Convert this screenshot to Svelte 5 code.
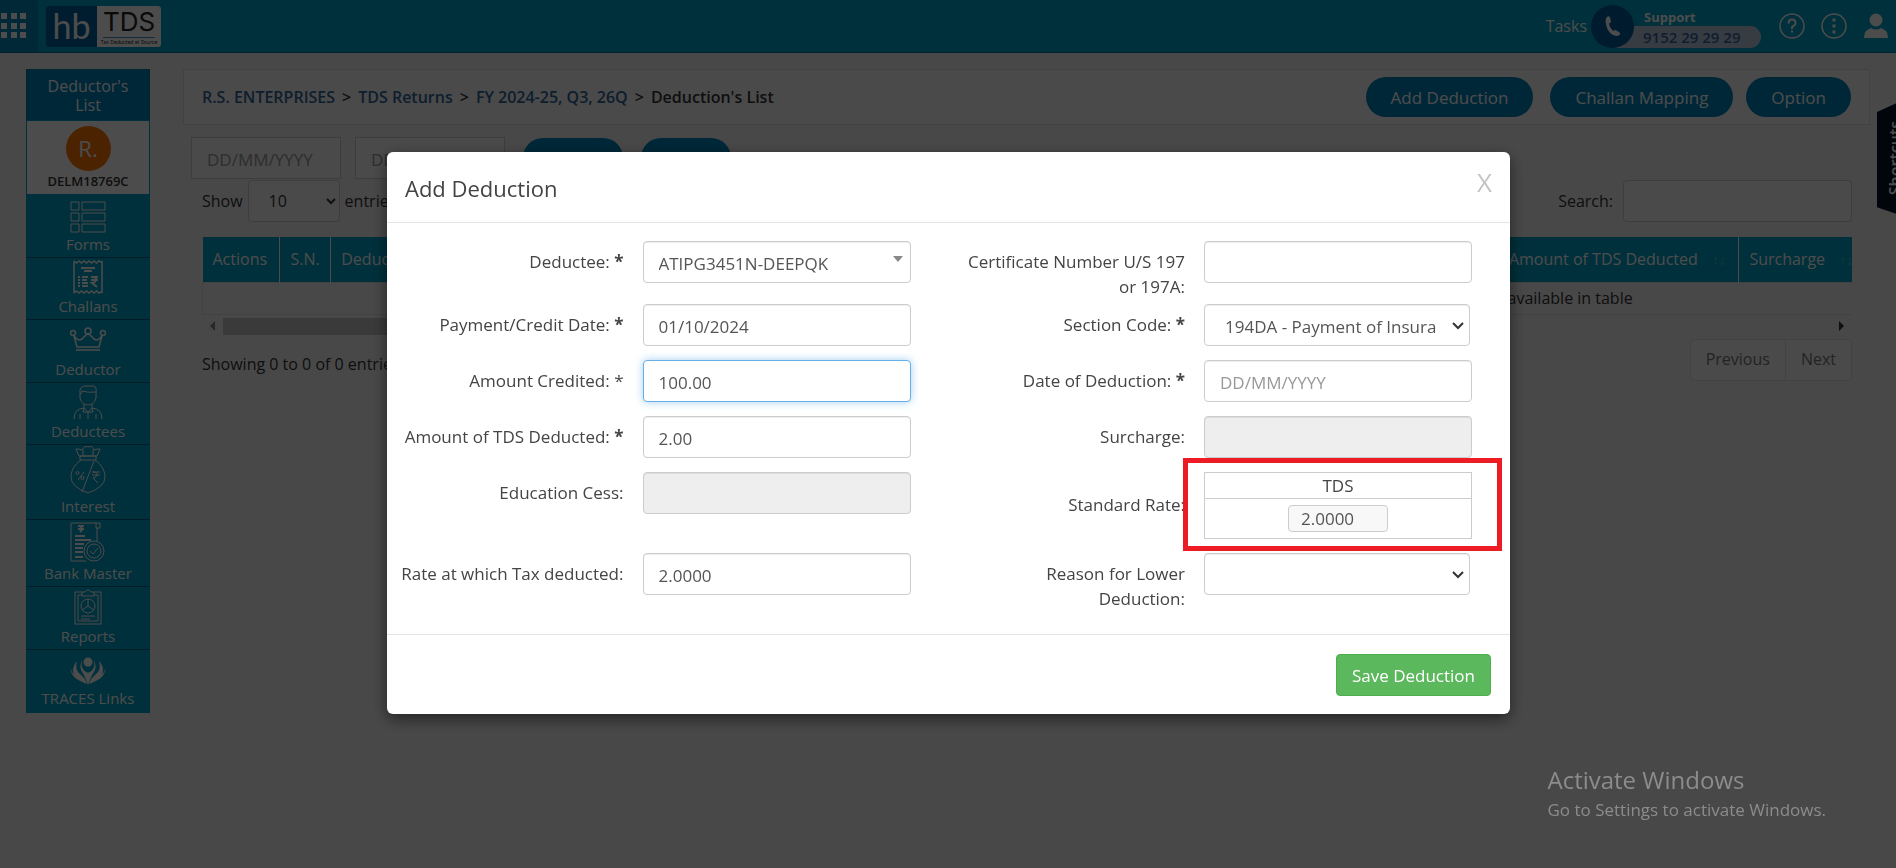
<script lang="ts">
	type Item = { name: string; icon: string; height: number };

	const items: Item[] = [
		{ name: 'Forms', icon: 'forms', height: 63 },
		{ name: 'Challans', icon: 'challans', height: 62 },
		{ name: 'Deductor', icon: 'crown', height: 63 },
		{ name: 'Deductees', icon: 'person', height: 62 },
		{ name: 'Interest', icon: 'bag', height: 75 },
		{ name: 'Bank Master', icon: 'bank', height: 67 },
		{ name: 'Reports', icon: 'reports', height: 63 },
		{ name: 'TRACES Links', icon: 'traces', height: 63 }
	];

	// widths are shares of the whole (scrolling) table
	const columns = [
		{ name: 'Actions', width: 2.9 },
		{ name: 'S.N.', width: 1.9 },
		{ name: 'Deductee Name', width: 43.7 },
		{ name: 'Amount of TDS Deducted', width: 9, sort: true },
		{ name: 'Surcharge', width: 4.6, sort: true },
		{ name: '', width: 37.9 }
	];

	let amount = '100.00';
	let paid = '01/10/2024';
	let tds = '2.00';
	let rate = '2.0000';
	let open = true;

	function close() {
		open = false;
	}
</script>

<div class="page">
	<header>
		<button class="apps" aria-label="Apps">
			<svg viewBox="0 0 26 26" width="26" height="26" fill="#fff">
				{#each [0, 10, 19] as y}
					{#each [0, 10, 19] as x}
						<rect {x} {y} width="6" height="6" />
					{/each}
				{/each}
			</svg>
		</button>
		<a class="logo" href="#home">
			<span class="hb">hb</span>
			<span class="tds">
				<b>TDS</b>
				<small>Tax Deducted at Source</small>
			</span>
		</a>
		<nav class="top">
			<a class="tasks" href="#tasks">Tasks</a>
			<div class="support">
				<span class="phone">
					<svg viewBox="0 0 16 20" width="16" height="20" fill="#fff">
						<path d="M2 1q2-1.500 3 .5l1 4q0 1.500-2 2 .5 4 4.500 7.500 1.500-1.500 3-.5l3 2q1.500 1.500 0 2.500-3 2-7.500-.5Q1 14 .5 5 .5 2 2 1z" />
					</svg>
				</span>
				<div class="lines">
					<b>Support</b>
					<span class="number">9152 29 29 29</span>
				</div>
			</div>
			<button aria-label="Help">
				<svg viewBox="0 0 26 26" width="26" height="26" fill="none" stroke="#fff" stroke-width="1.500">
					<circle cx="13" cy="13" r="12" />
					<path d="M9.500 10.500q0-4 3.500-4t3.500 3.500q0 2-2 3t-1.500 3M13 17.500v2" stroke-width="2" />
				</svg>
			</button>
			<button aria-label="More">
				<svg viewBox="0 0 26 26" width="26" height="26" fill="none" stroke="#fff" stroke-width="1.500">
					<circle cx="13" cy="13" r="12" />
					<path d="M13 5.500v3M13 11.500v3M13 17.500v3" stroke-width="3" />
				</svg>
			</button>
			<button aria-label="Account">
				<svg viewBox="0 0 26 26" width="26" height="26" fill="#fff">
					<circle cx="13" cy="7" r="6.500" />
					<path d="M1 25q0-8 7-10 5 3 10 0 7 2 7 10z" />
				</svg>
			</button>
		</nav>
	</header>

	<div class="columns">
		<aside>
			<a class="list" href="#deductors">Deductor's List</a>
			<div class="profile">
				<span class="avatar">R.</span>
				<span>DELM18769C</span>
			</div>
			{#each items as item}
				<a class="item" href="#{item.icon}" style="height: {item.height}px">
					{#if item.icon === 'forms'}
						<svg viewBox="0 0 36 32" width="36" height="32">
							<path d="M1 1h8v8H1zM12 1h23v8H12zM1 12h8v8H1zM12 12h23v8H12zM1 23h8v8H1zM12 23h23v8H12z" />
						</svg>
					{:else if item.icon === 'challans'}
						<svg viewBox="0 0 32 36" width="32" height="36">
							<path d="M2 2v32M30 2v32M2 2l2.500 2L7 2l2.500 2L12 2l2.500 2L17 2l2.500 2L22 2l2.500 2L27 2l3 1.500M2 34l2.500-2L7 34l2.500-2 2.500 2 2.500-2 2.500 2 2.500-2 2.500 2 2.500-2 2.500 2 3-1.500" stroke-width="1.500" />
							<path d="M9 9h14M12 12h8M6 18h2M10 18h6M6 21h2M10 21h5M6 24h2M10 24h6M6 27h2M10 27h6" stroke-width="2" />
							<path d="M19 18h7M19 21h7M20 18q5 0 4 3t-4 3l5 4" stroke-width="2" />
						</svg>
					{:else if item.icon === 'crown'}
						<svg viewBox="0 0 36 34" width="36" height="34" stroke-width="1.500">
							<circle cx="3" cy="9" r="2.500" />
							<circle cx="18" cy="7" r="3" />
							<circle cx="33" cy="9" r="2.500" />
							<path d="M4 12l3 11h22l3-11q-5 7-9 2l-4-4h-2l-4 4q-4 5-9-2zM6 26h24" />
						</svg>
					{:else if item.icon === 'person'}
						<svg viewBox="0 0 30 36" width="30" height="36">
							<path d="M7 10Q6 2 12 2h9q3 1 2 8v4q-2 7-8 7t-8-7zM7 10q2 0 2-3 6 2 14 1M11 20v4l4 4 4-4v-4M11 24q-10 1-10 11M19 24q10 1 10 11M15 28v7M7 30v5M23 30v5M11 24l-1 4 5 0 5 0-1-4" />
						</svg>
					{:else if item.icon === 'bag'}
						<svg viewBox="0 0 36 50" width="36" height="50">
							<path d="M9 11L6 4q4 0 6 1 3-5 6-3 5-2 6 3 2-1 6-1l-3 7zM13 5v5M23 5v5M10 11h16v4H10zM11 15Q1 22 1 32t17 16q17-6 17-16T25 15M24 16L12 47M6 28a1.500 1.500 0 1 0 3 0 1.500 1.500 0 1 0-3 0M14 27L8 35M11 33a1.500 1.500 0 1 0 3 0 1.500 1.500 0 1 0-3 0M22 27h8M22 30h8M23 27q5 0 4 3t-4 3l5 5" />
						</svg>
					{:else if item.icon === 'bank'}
						<svg viewBox="0 0 36 40" width="36" height="40">
							<path d="M16 39H1V1h29v5h-4V1M27 6v13" />
							<path d="M8 4h6M8 7h6M10 4q4 3 0 6M5 14h10M5 18h16M5 22h9M5 26h8M5 30h8M5 35h8" stroke-width="2" />
							<circle cx="24" cy="29" r="10" />
							<circle cx="24" cy="29" r="7" />
							<path d="M20 29l3 3 5-6" />
						</svg>
					{:else if item.icon === 'reports'}
						<svg viewBox="0 0 28 36" width="28" height="36">
							<path d="M8 3H1v32h26V3h-7M8 6H4v26h20V6h-4M8 3h3q3-4 6 0h3v4H8zM14 17V10M14 17l6 4M14 17l-6 4M7 27h14M7 30h9" />
							<circle cx="14" cy="17" r="7" />
						</svg>
					{:else}
						<svg class="solid" viewBox="0 0 36 30" width="36" height="30">
							<circle cx="18" cy="5" r="4.500" />
							<path d="M12 3q-4 8 2 15l4 10 4-10q6-7 2-15 2 10-6 13-8-3-6-13z" />
							<path d="M7 4q-3 9 4 14 4 3 6 9Q3 22 3 13 4 7 7 4zM29 4q3 9-4 14-4 3-6 9 14-5 14-14 0-5-4-9z" />
							<path d="M0 10q1 7 9 11 3 1 5 4Q1 22 0 10zM36 10q-1 7-9 11-3 1-5 4 13-3 14-15z" />
						</svg>
					{/if}
					<span>{item.name}</span>
				</a>
			{/each}
		</aside>

		<main>
			<div class="crumbs">
				<p>
					<a href="#company">R.S. ENTERPRISES</a>
					<span>&gt;</span>
					<a href="#returns">TDS Returns</a>
					<span>&gt;</span>
					<a href="#period">FY 2024-25, Q3, 26Q</a>
					<span>&gt;</span>
					<span>Deduction's List</span>
				</p>
				<div class="actions">
					<button class="pill add">Add Deduction</button>
					<button class="pill map">Challan Mapping</button>
					<button class="pill">Option</button>
				</div>
			</div>

			<div class="filters">
				<input aria-label="From date" placeholder="DD/MM/YYYY" />
				<input aria-label="To date" placeholder="DD/MM/YYYY" />
				<button class="pill" aria-label="Search"></button>
				<button class="pill" aria-label="Reset"></button>
			</div>

			<div class="list-area">
				<div class="tools">
					<label>
						Show
						<select>
							<option>10</option>
							<option>25</option>
						</select>
						entries
					</label>
					<label class="search">Search: <input type="search" /></label>
				</div>
				<div class="scroller">
					<table class="grid">
						<thead>
							<tr>
								{#each columns as column}
									<th style="width: {column.width}%">
										{column.name}
										{#if column.sort}<span class="sort">↑↓</span>{/if}
									</th>
								{/each}
							</tr>
						</thead>
						<tbody>
							<tr><td colspan={columns.length}>No data available in table</td></tr>
						</tbody>
					</table>
				</div>
				<div class="bar"><i class="left"></i><span></span><i class="right"></i></div>
				<div class="foot">
					<p>Showing 0 to 0 of 0 entries</p>
					<div class="pager">
						<button>Previous</button>
						<button>Next</button>
					</div>
				</div>
			</div>
		</main>
	</div>
	<button class="shortcuts"><span>Shortcuts</span></button>
</div>

{#if open}
	<div class="backdrop">
		<div class="modal" role="dialog" aria-modal="true" aria-labelledby="title">
			<div class="modal-head">
				<h4 id="title">Add Deduction</h4>
				<button class="close" on:click={close}>X</button>
			</div>
			<form on:submit|preventDefault>
				<div class="fields">
					<div class="field">
						<label for="deductee">Deductee: <b>*</b></label>
						<div class="control combo">
							<select id="deductee">
								<option>ATIPG3451N-DEEPQK</option>
							</select>
						</div>
					</div>
					<div class="field">
						<label for="certificate">Certificate Number U/S 197 or 197A:</label>
						<div class="control"><input id="certificate" /></div>
					</div>
					<div class="field">
						<label for="paid">Payment/Credit Date: <b>*</b></label>
						<div class="control"><input id="paid" bind:value={paid} /></div>
					</div>
					<div class="field">
						<label for="section">Section Code: <b>*</b></label>
						<div class="control drop">
							<select id="section">
								<option>194DA - Payment of Insura</option>
							</select>
							<svg viewBox="0 0 12 8" width="12" height="8"><path d="M1 1l5 5 5-5" /></svg>
						</div>
					</div>
					<div class="field">
						<label for="amount">Amount Credited: *</label>
						<div class="control"><input id="amount" class="active" bind:value={amount} /></div>
					</div>
					<div class="field">
						<label for="deducted">Date of Deduction: <b>*</b></label>
						<div class="control"><input id="deducted" placeholder="DD/MM/YYYY" /></div>
					</div>
					<div class="field">
						<label for="tds">Amount of TDS Deducted: <b>*</b></label>
						<div class="control"><input id="tds" bind:value={tds} /></div>
					</div>
					<div class="field">
						<label for="surcharge">Surcharge:</label>
						<div class="control"><input id="surcharge" disabled /></div>
					</div>
					<div class="field">
						<label for="cess">Education Cess:</label>
						<div class="control"><input id="cess" disabled /></div>
					</div>
					<div class="field middle">
						<label for="standard">Standard Rate:</label>
						<div class="control marked">
							<table class="rates">
								<thead>
									<tr><th>TDS</th></tr>
								</thead>
								<tbody>
									<tr><td><input id="standard" value="2.0000" readonly /></td></tr>
								</tbody>
							</table>
						</div>
					</div>
					<div class="field">
						<label for="rate">Rate at which Tax deducted:</label>
						<div class="control"><input id="rate" bind:value={rate} /></div>
					</div>
					<div class="field">
						<label for="reason">Reason for Lower Deduction:</label>
						<div class="control drop">
							<select id="reason">
								<option></option>
							</select>
							<svg viewBox="0 0 12 8" width="12" height="8"><path d="M1 1l5 5 5-5" /></svg>
						</div>
					</div>
				</div>
				<div class="modal-foot">
					<button class="save">Save Deduction</button>
				</div>
			</form>
		</div>
	</div>
{/if}

<div class="activate">
	<p>Activate Windows</p>
	<span>Go to Settings to activate Windows.</span>
</div>

<style>
	:global(body) {
		margin: 0;
		background: #f0f0f0;
		color: #333;
		font: 16px/25px 'Open Sans', 'Noto Sans', sans-serif;
		overflow-x: hidden;
	}

	:global(*) {
		box-sizing: border-box;
	}

	button,
	input,
	select {
		font: inherit;
		color: inherit;
		margin: 0;
	}

	button {
		border: 0;
		background: none;
		padding: 0;
		cursor: pointer;
	}

	a {
		text-decoration: none;
		color: inherit;
	}

	p {
		margin: 0;
	}

	header {
		display: flex;
		align-items: center;
		height: 53px;
		background: #00a0c6;
		border-bottom: 1px solid #007a99;
		color: #fff;
	}

	.apps {
		display: flex;
		align-items: center;
		width: 38px;
		height: 52px;
		padding-left: 1px;
		background: #0086b4;
	}

	.logo {
		display: flex;
		width: 115px;
		height: 41px;
		margin-left: 8px;
	}

	.hb {
		width: 51px;
		border-radius: 3px 0 0 3px;
		background: #005f9f;
		font: 34px/40px Lato, sans-serif;
		text-align: center;
	}

	.tds {
		display: flex;
		flex: 1;
		flex-direction: column;
		align-items: center;
		border-radius: 0 3px 3px 0;
		background: #fff;
		color: #222;
	}

	.tds b {
		font: 26px/31px Inter, sans-serif;
		border-bottom: 1px solid #4a90c8;
	}

	.tds small {
		font: 5px/8px Inter, sans-serif;
		white-space: nowrap;
	}

	.top {
		display: flex;
		align-items: center;
		margin-left: auto;
		padding-right: 7px;
	}

	.top button {
		display: flex;
		margin-left: 16px;
	}

	.tasks {
		margin-right: 4px;
	}

	.support {
		display: flex;
		margin-right: 2px;
	}

	.phone {
		display: flex;
		align-items: center;
		justify-content: center;
		width: 43px;
		height: 43px;
		border-radius: 50%;
		background: #005a9c;
		z-index: 1;
	}

	.lines {
		display: flex;
		flex-direction: column;
		justify-content: flex-end;
		margin-left: -22px;
		font-size: 15px;
		line-height: 22px;
	}

	.lines b {
		padding-left: 32px;
		font-size: 13px;
		line-height: 18px;
	}

	.number {
		width: 149px;
		padding-left: 31px;
		border-radius: 0 12px 12px 0;
		background: #b9c8df;
		color: #35629e;
		font-weight: 600;
	}

	.columns {
		display: flex;
		align-items: flex-start;
		padding: 16px 26px 0;
	}

	aside {
		width: 124px;
		flex: none;
		background: #00a0c6;
		color: #fff;
		text-align: center;
		font-size: 15px;
	}

	.list {
		display: block;
		height: 51px;
		padding: 8px 20px;
		background: #0084bc;
		font-size: 16px;
		line-height: 19px;
	}

	.profile {
		display: flex;
		flex-direction: column;
		align-items: center;
		height: 75px;
		padding-top: 5px;
		border: 1px solid #00a0c6;
		background: #fff;
		color: #333;
		font-size: 13px;
		font-weight: 600;
		line-height: 20px;
	}

	.avatar {
		width: 45px;
		height: 45px;
		border-radius: 50%;
		background: #ff7700;
		color: #fff;
		font-size: 22px;
		font-weight: 400;
		line-height: 45px;
	}

	.item {
		display: flex;
		flex-direction: column;
		align-items: center;
		justify-content: flex-end;
		border-bottom: 1px solid #006080;
		line-height: 22px;
		padding-bottom: 2px;
	}

	.item:last-child {
		border-bottom: 0;
		padding-bottom: 4px;
	}

	.item svg {
		fill: none;
		stroke: #fff;
	}

	.item .solid {
		fill: #fff;
		stroke: none;
	}

	main {
		flex: 1;
		min-width: 0;
		margin-left: 33px;
	}

	.crumbs {
		display: flex;
		align-items: center;
		justify-content: space-between;
		height: 56px;
		padding: 0 18px;
		border: 1px solid #ddd;
		background: #f8f8f8;
	}

	.crumbs p {
		display: flex;
		gap: 7px;
		font-weight: 600;
	}

	.crumbs a {
		color: #2f6698;
	}

	.actions {
		display: flex;
	}

	.pill {
		height: 40px;
		padding: 0 25px;
		border-radius: 20px;
		background: #0084bc;
		color: #fff;
		font-size: 17px;
	}

	.add {
		margin-right: 17px;
	}

	.map {
		margin-right: 13px;
	}

	.filters {
		display: flex;
		align-items: center;
		height: 42px;
		margin: 12px 0 1px 8px;
	}

	.filters input {
		width: 150px;
		height: 42px;
		margin-right: 14px;
		padding: 2px 15px 0;
		border: 1px solid #ccc;
		background: #f8f8f8;
		font-size: 17px;
	}

	.filters .pill {
		width: 100px;
		margin: 0 14px 0 4px;
	}

	.filters .pill:last-child {
		width: 90px;
	}

	.list-area {
		padding: 0 18px 0 19px;
	}

	.tools {
		display: flex;
		justify-content: space-between;
	}

	.tools label {
		display: flex;
		align-items: center;
		gap: 5px;
	}

	.tools select,
	.tools input {
		height: 42px;
		border: 1px solid #ccc;
		border-radius: 4px;
		background: #f8f8f8;
	}

	.tools select {
		width: 92px;
		padding: 0 0 0 16px;
	}

	.tools .search {
		gap: 10px;
	}

	.tools input {
		width: 229px;
	}

	.scroller {
		margin-top: 15px;
		overflow: hidden;
	}

	.grid {
		width: 162%;
		border-collapse: collapse;
		table-layout: fixed;
		white-space: nowrap;
	}

	.grid th {
		height: 45px;
		padding: 0 0 0 10px;
		border-right: 1px solid #fff;
		background: #00a0c6;
		color: #fff;
		font-weight: 400;
		text-align: left;
	}

	.grid th:nth-child(n + 5) {
		border-right: 0;
	}

	.grid td {
		height: 32px;
		padding: 0;
		border: 1px solid #ddd;
		text-align: center;
	}

	.sort {
		margin-left: 10px;
		font-size: 14px;
		opacity: 0.3;
	}

	.bar {
		display: flex;
		align-items: center;
		gap: 8px;
		height: 17px;
		margin-top: 3px;
		padding: 0 8px;
		background: #f1f1f1;
	}

	.bar span {
		width: 62%;
		height: 17px;
		background: #c1c1c1;
	}

	.bar i {
		border: 5px solid transparent;
	}

	.bar .left {
		border-left: 0;
		border-right-color: #888;
	}

	.bar .right {
		margin-left: auto;
		border-right: 0;
		border-left-color: #333;
	}

	.foot {
		display: flex;
		justify-content: space-between;
		padding-top: 4px;
	}

	.foot p {
		padding-top: 13px;
	}

	.pager {
		display: flex;
		border: 1px solid #ddd;
		border-radius: 4px;
		background: #f8f8f8;
		color: #777;
	}

	.pager button {
		height: 40px;
		padding: 0 15px;
	}

	.pager button + button {
		border-left: 1px solid #ddd;
	}

	.shortcuts {
		position: fixed;
		top: 103px;
		right: -14px;
		display: flex;
		align-items: center;
		width: 33px;
		height: 111px;
		padding-left: 6px;
		background: #04122a;
		border-radius: 6px;
		clip-path: polygon(0 8%, 60% 0, 100% 0, 100% 100%, 60% 100%, 0 94%);
		color: #fff;
	}

	.shortcuts span {
		writing-mode: vertical-rl;
		transform: rotate(180deg);
		font-weight: 600;
	}

	.backdrop {
		position: fixed;
		inset: 0;
		z-index: 10;
		padding: 152px 0 0 1px;
		background: rgba(0, 0, 0, 0.7);
		font-size: 17px;
		color: #444;
	}

	.modal {
		width: 1123px;
		max-width: 96%;
		margin: 0 auto;
		border-radius: 6px;
		background: #fff;
		box-shadow: 0 5px 15px rgba(0, 0, 0, 0.5);
	}

	.modal-head {
		display: flex;
		justify-content: space-between;
		align-items: flex-start;
		height: 71px;
		padding: 18px 18px 0;
		border-bottom: 1px solid #e5e5e5;
	}

	h4 {
		margin: 0;
		font-size: 22px;
		font-weight: 400;
		line-height: 37px;
	}

	.close {
		color: #c4c4c4;
		font-size: 26px;
	}

	.fields {
		display: grid;
		grid-template-columns: 1fr 1fr;
		row-gap: 5px;
		padding: 18px 0 23px;
	}

	.field {
		display: flex;
		align-items: flex-start;
		gap: 19px;
		padding-right: 38px;
	}

	.field label {
		flex: 1;
		padding: 8px 0 0 12px;
		text-align: right;
	}

	.middle label {
		padding-top: 20px;
	}

	.control {
		position: relative;
		width: 268px;
		padding-bottom: 9px;
	}

	.control input,
	.control select {
		display: block;
		width: 100%;
		height: 42px;
		padding: 2px 15px 0;
		border: 1px solid #ccc;
		border-radius: 4px;
		background: #fff;
		box-shadow: inset 0 1px 1px rgba(0, 0, 0, 0.075);
		color: #555;
	}

	.control input:disabled {
		background: #eee;
	}

	.control .active {
		border-color: #66afe9;
		box-shadow: 0 0 8px rgba(102, 175, 233, 0.6);
	}

	::placeholder {
		color: #999;
		opacity: 1;
	}

	.control select {
		appearance: none;
	}

	.combo::after {
		content: '';
		position: absolute;
		top: 15px;
		right: 8px;
		border: 5px solid transparent;
		border-top: 6px solid #888;
		border-bottom: 0;
	}

	.drop select {
		width: 266px;
		padding: 2px 0 0 20px;
	}

	.drop svg {
		position: absolute;
		top: 18px;
		right: 8px;
		fill: none;
		stroke: #333;
		stroke-width: 2;
		pointer-events: none;
	}

	.marked::after {
		content: '';
		position: absolute;
		inset: -14px -30px -3px -21px;
		border: 5px solid #ed1c24;
		pointer-events: none;
	}

	.rates {
		width: 100%;
		border-collapse: collapse;
	}

	.rates th,
	.rates td {
		height: 26px;
		padding: 0;
		border: 1px solid #ccc;
		font-weight: 400;
	}

	.rates td {
		height: 40px;
	}

	.rates input {
		width: 100px;
		height: 27px;
		margin: 0 auto;
		padding: 0 12px;
		background: #f8f8f8;
		box-shadow: none;
	}

	.modal-foot {
		display: flex;
		justify-content: flex-end;
		padding: 19px 19px 18px;
		border-top: 1px solid #e5e5e5;
	}

	.save {
		height: 42px;
		padding: 0 15px;
		border: 1px solid #4cae4c;
		border-radius: 4px;
		background: #5cb85c;
		color: #fff;
	}

	.activate {
		position: fixed;
		right: 70px;
		bottom: 46px;
		z-index: 20;
		color: #8c8c8c;
		font-size: 17px;
	}

	.activate p {
		font-size: 24px;
		line-height: 34px;
	}
</style>
